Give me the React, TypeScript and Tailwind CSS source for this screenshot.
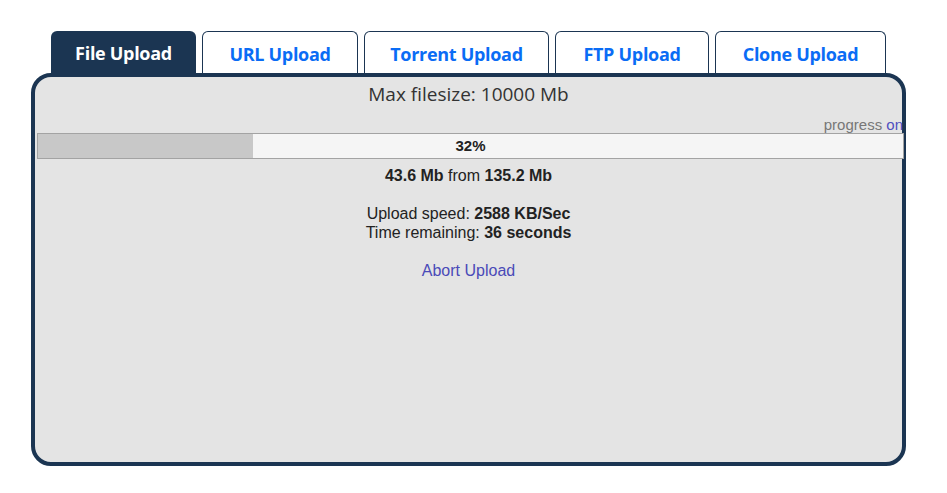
import React from "react";

const tabs = [
  { label: "File Upload", w: "w-[145px]", active: true },
  { label: "URL Upload", w: "w-[156px]", active: false },
  { label: "Torrent Upload", w: "w-[185px]", active: false },
  { label: "FTP Upload", w: "w-[154px]", active: false },
  { label: "Clone Upload", w: "w-[171px]", active: false },
];

export default function App() {
  return (
    <div className="w-[947px] h-[493px] bg-white pt-[31px] pl-[31px]">
      <div className="flex gap-[6px] pl-[20px] h-[42px]">
        {tabs.map((t) =>
          t.active ? (
            <div
              key={t.label}
              className={`${t.w} h-[44px] rounded-t-[6px] bg-[#1b3552] text-white flex items-center justify-center text-[18px] tracking-[-0.3px] font-bold font-['Open_Sans',sans-serif] pt-[1px]`}
            >
              {t.label}
            </div>
          ) : (
            <div
              key={t.label}
              className={`${t.w} h-[42px] rounded-t-[6px] bg-white border border-b-0 border-[#1b3552] text-[#0a6cf5] flex items-center justify-center text-[18px] tracking-[-0.3px] font-bold font-['Open_Sans',sans-serif] pt-[3px]`}
            >
              {t.label}
            </div>
          )
        )}
      </div>
      <div className="w-[875px] h-[393px] border-4 border-[#1b3552] rounded-[20px] bg-[#e4e4e4] relative">
        <div className="text-center text-[19px] leading-[24px] text-[#333] font-['Open_Sans',sans-serif] pt-[5px]">
          Max filesize: 10000 Mb
        </div>
        <div className="text-right text-[15px] leading-[17px] font-['Liberation_Sans',Arial,sans-serif] mt-[10px] -mr-[1px] text-[#777]">
          progress <span className="text-[#4f4fc0]">on</span>
        </div>
        <div className="ml-[2px] w-[867px] h-[26px] border border-[#a3a3a3] bg-[#f5f5f5] relative font-['Liberation_Sans',Arial,sans-serif]">
          <div className="h-full w-[215px] bg-[#c8c8c8]" />
          <div className="absolute inset-0 flex items-center justify-center text-[15px] font-bold text-[#222]">
            32%
          </div>
        </div>
        <div className="font-['Liberation_Sans',Arial,sans-serif] text-[16px] leading-[19px] text-[#222] text-center">
          <div className="mt-[7px]">
            <b>43.6 Mb</b> from <b>135.2 Mb</b>
          </div>
          <div className="mt-[19px]">
            Upload speed: <b>2588 KB/Sec</b>
          </div>
          <div>
            Time remaining: <b>36 seconds</b>
          </div>
          <div className="mt-[19px] text-[#4a4ab8]">Abort Upload</div>
        </div>
      </div>
    </div>
  );
}
